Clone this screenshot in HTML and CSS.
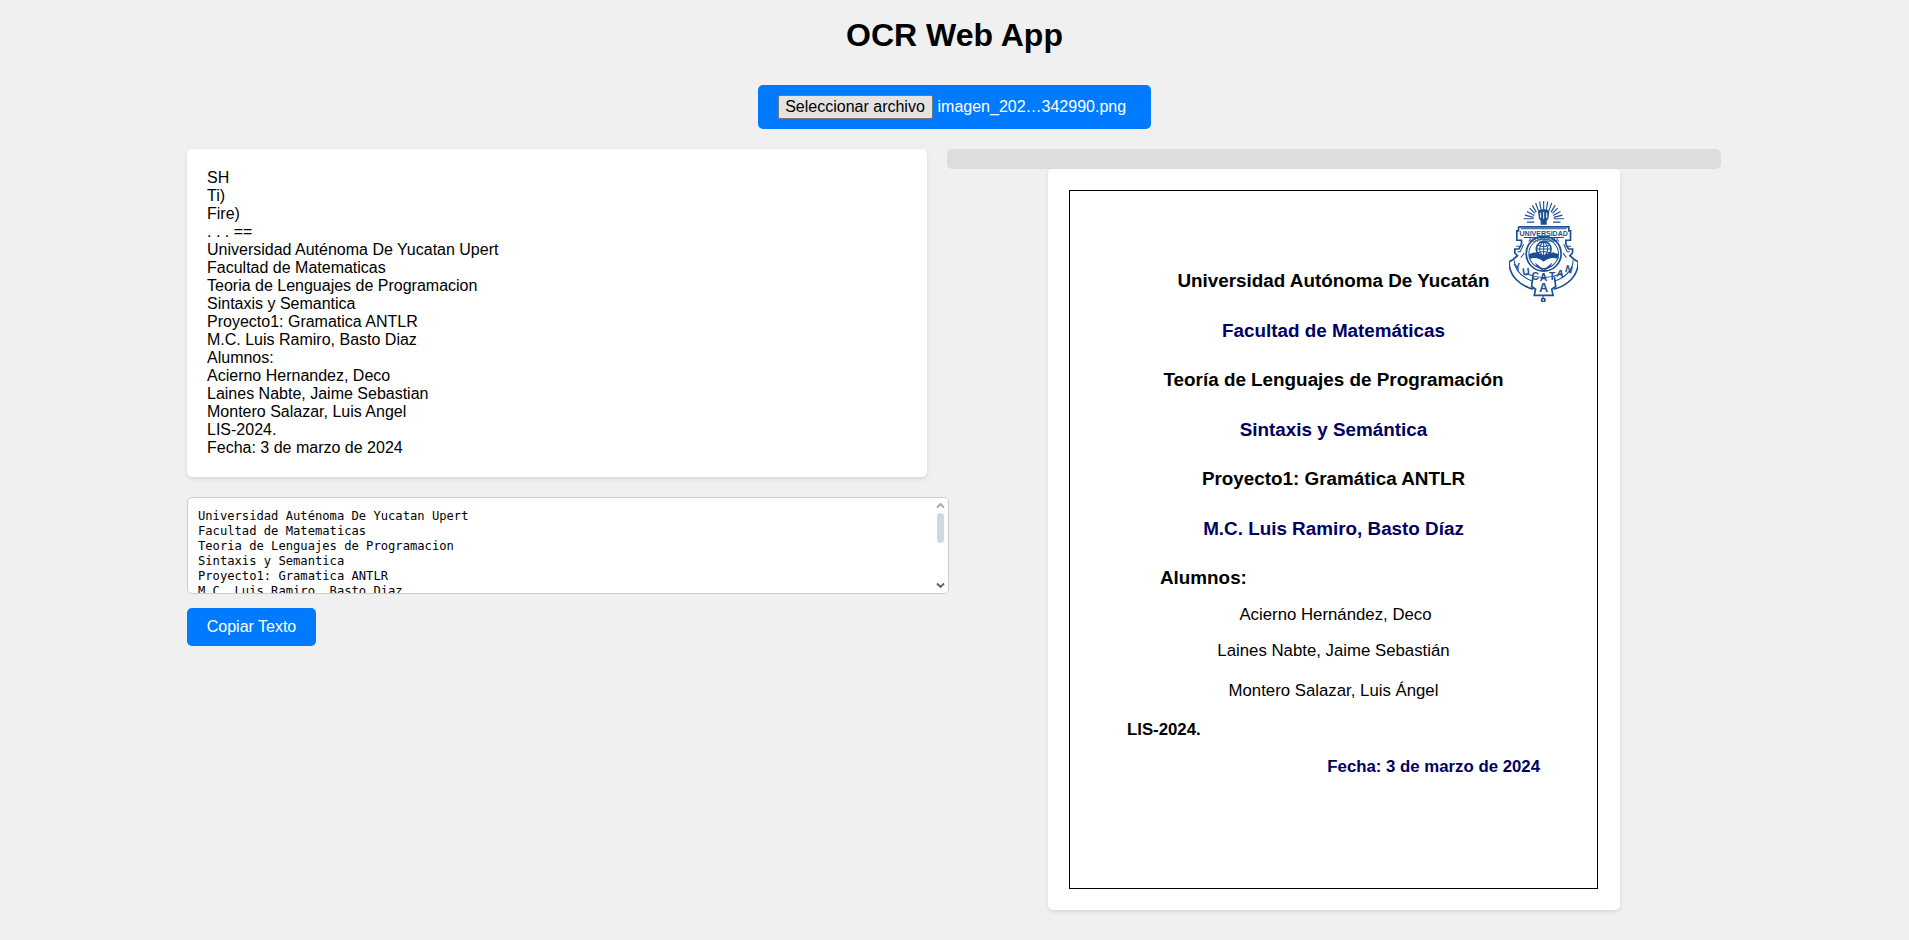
FILE: index.html
```html
<!DOCTYPE html>
<html lang="es">
<head>
<meta charset="utf-8">
<title>OCR Web App</title>
<link rel="stylesheet" href="styles.css">
</head>
<body>
<h1 class="title">OCR Web App</h1>
<div class="upload-row">
  <div class="upload"><button class="file-btn" type="button">Seleccionar archivo</button><span class="file-name">imagen_202…342990.png</span></div>
</div>
<main class="layout">
  <section class="left">
    <div class="result-card">SH
Ti)
Fire)
. . . ==
Universidad Auténoma De Yucatan Upert
Facultad de Matematicas
Teoria de Lenguajes de Programacion
Sintaxis y Semantica
Proyecto1: Gramatica ANTLR
M.C. Luis Ramiro, Basto Diaz
Alumnos:
Acierno Hernandez, Deco
Laines Nabte, Jaime Sebastian
Montero Salazar, Luis Angel
LIS-2024.
Fecha: 3 de marzo de 2024</div>
    <div class="output-wrap">
      <textarea class="output" readonly>Universidad Auténoma De Yucatan Upert
Facultad de Matematicas
Teoria de Lenguajes de Programacion
Sintaxis y Semantica
Proyecto1: Gramatica ANTLR
M.C. Luis Ramiro, Basto Diaz
Alumnos:
Acierno Hernandez, Deco
Laines Nabte, Jaime Sebastian
Montero Salazar, Luis Angel
LIS-2024.
Fecha: 3 de marzo de 2024</textarea>
      <div class="scrollbar" aria-hidden="true">
        <svg class="arrow" viewBox="0 0 9 7"><path class="arrow-up" d="M1 5.500l3.500-3.500 3.500 3.500"/></svg>
        <div class="track"><div class="thumb"></div></div>
        <svg class="arrow" viewBox="0 0 9 7"><path class="arrow-down" d="M1 1.500l3.500 3.500 3.500-3.500"/></svg>
      </div>
    </div>
    <button class="copy-btn" type="button">Copiar Texto</button>
  </section>
  <section class="right">
    <div class="bar"></div>
    <div class="image-card">
      <div class="doc">
        <svg class="logo" viewBox="27 15 205 301" aria-label="Escudo UADY">
          <g class="logo-rays">
            <path d="M130 15v26M118 17l4 24M142 17l-4 24M106 21l8 22M154 21l-8 22M96 28l12 20M164 28l-12 20M88 36l16 16M172 36l-16 16M80 46l22 12M180 46l-22 12M74 57l26 7M186 57l-26 7M70 68h30M190 68h-30M80 78h22M180 78h-22"/>
          </g>
          <path class="logo-solid" d="M113 44c5-6 28-6 34 0l-3 24-5 6v12h-18V74l-5-6z"/>
          <path class="logo-cut" d="M121 50v16M130 48v20M139 50v16"/>
          <g class="logo-lines">
            <path class="logo-heavy" d="M55 92h150v12h5v28h-14v12M55 92v12h-5v28h14v12"/>
            <path d="M62 98h136M70 124h120"/>
            <path class="logo-heavy" d="M64 144l-8 14h-12v12l8 8-14 12-11 6M196 144l8 14h12v12l-8 8 14 12 11 6"/>
            <path d="M70 144l-10 22h-8M190 144l10 22h8M72 170l-10 14M188 170l10 14M48 150h10M212 150h-10"/>
            <circle class="logo-heavy" cx="130" cy="172" r="52"/>
            <circle cx="130" cy="172" r="44"/>
            <circle class="logo-heavy" cx="130" cy="158" r="22"/>
            <path d="M108 158h44M130 136v44M112 146c12 6 24 6 36 0M112 170c12-6 24-6 36 0M130 136c-16 12-16 32 0 44M130 136c16 12 16 32 0 44"/>
            <path class="logo-heavy" d="M27 196c0 42 30 70 72 82M233 196c0 42-30 70-72 82"/>
            <path d="M42 192c2 30 22 50 56 62M218 192c-2 30-22 50-56 62"/>
            <path class="logo-heavy" d="M98 240l-4 30 12 8-4 18h56l-4-18 12-8-4-30"/>
            <path d="M76 230c34 16 74 16 108 0"/>
            <path d="M128 296v8"/>
            <circle class="logo-heavy" cx="129" cy="310" r="5"/>
          </g>
          <path class="logo-solid" d="M86 174c16-10 32-6 44 4 12-10 28-14 44-4v14c-16-6-30-4-44 8-14-12-28-14-44-8z"/>
          <path class="logo-solid" d="M104 198l26 22 26-22-6 14-20 12-20-12z"/>
          <text class="logo-t1" x="130" y="119" text-anchor="middle" textLength="144" lengthAdjust="spacingAndGlyphs">UNIVERSIDAD</text>
          <text class="logo-t2" x="130" y="138" text-anchor="middle" textLength="92" lengthAdjust="spacingAndGlyphs">AUTONOMA</text>
          <text class="logo-t3" transform="translate(44 224) rotate(-12)">Y</text>
          <text class="logo-t3" transform="translate(68 238) rotate(-8)">U</text>
          <text class="logo-t3" transform="translate(94 251)">C</text>
          <text class="logo-t3" transform="translate(118 253)">A</text>
          <text class="logo-t3" transform="translate(146 251)">T</text>
          <text class="logo-t3" transform="translate(167 240) rotate(8)">A</text>
          <text class="logo-t3" transform="translate(192 226) rotate(14)">N</text>
          <text class="logo-t4" x="130" y="287" text-anchor="middle">A</text>
        </svg>
        <div class="line big">Universidad Autónoma De Yucatán</div>
        <div class="line big navy">Facultad de Matemáticas</div>
        <div class="line big">Teoría de Lenguajes de Programación</div>
        <div class="line big navy">Sintaxis y Semántica</div>
        <div class="line big">Proyecto1: Gramática ANTLR</div>
        <div class="line big navy">M.C. Luis Ramiro, Basto Díaz</div>
        <div class="line big alumnos">Alumnos:</div>
        <div class="line name name-a">Acierno Hernández, Deco</div>
        <div class="line name name-b">Laines Nabte, Jaime Sebastián</div>
        <div class="line name name-c">Montero Salazar, Luis Ángel</div>
        <div class="line lis">LIS-2024.</div>
        <div class="line fecha">Fecha: 3 de marzo de 2024</div>
      </div>
    </div>
  </section>
</main>
</body>
</html>
```
FILE: styles.css
```css
* { box-sizing: border-box; }
html, body { margin: 0; height: 100%; overflow: hidden; }
body {
  background: #f0f0f0;
  color: #000;
  font-family: "Liberation Sans", Arial, sans-serif;
  font-size: 16px;
}
.title {
  margin: 0;
  padding-top: 17px;
  height: 85px;
  font-size: 32px;
  line-height: 37px;
  font-weight: 700;
  text-align: center;
}
.upload-row { display: flex; justify-content: center; padding-right: 1px; }
.upload {
  display: flex;
  align-items: center;
  width: 393px;
  height: 44px;
  padding: 0 20px;
  background: #007bff;
  border-radius: 5px;
}
.file-btn {
  width: 155px;
  height: 24px;
  padding: 0;
  background: #e3e3e3;
  border: 1px solid #767676;
  border-radius: 2px;
  color: #000;
  font: 16px "Liberation Sans", Arial, sans-serif;
}
.file-name { margin-left: 5px; color: #fff; white-space: nowrap; }
.layout {
  display: grid;
  grid-template-columns: 740px 774px;
  gap: 20px;
  width: 1534px;
  margin: 20px 0 0 187px;
}
.left { display: flex; flex-direction: column; align-items: flex-start; }
.result-card {
  width: 740px;
  padding: 20px;
  background: #fff;
  border-radius: 5px;
  box-shadow: 0 2px 4px rgba(0, 0, 0, .1);
  line-height: 18px;
  white-space: pre-line;
}
.output-wrap { position: relative; width: 762px; height: 97px; margin: 20px 0 14px; }
.output {
  display: block;
  width: 100%;
  height: 100%;
  padding: 11px 25px 10px 10px;
  border: 1px solid #ccc;
  border-radius: 5px;
  background: #fff;
  color: #000;
  font: 12.15px/15px "DejaVu Sans Mono", monospace;
  resize: none;
  outline: 0;
  overflow: hidden;
  white-space: pre;
}
.scrollbar {
  position: absolute;
  top: 1px;
  right: 1px;
  bottom: 1px;
  display: flex;
  flex-direction: column;
  width: 15px;
  background: #fff;
  border-radius: 0 4px 4px 0;
}
.arrow { display: block; width: 9px; height: 7px; margin: 4px 3px 4px; flex: none; }
.arrow-up, .arrow-down { fill: none; stroke-width: 1.8; }
.arrow-up { stroke: #a8a8a8; }
.arrow-down { stroke: #606060; }
.track { flex: 1; padding: 0 4px; }
.thumb { height: 30px; background: #cdd9e5; border-radius: 4px; }
.copy-btn {
  width: 129px;
  height: 38px;
  padding: 0;
  border: 0;
  border-radius: 5px;
  background: #007bff;
  color: #fff;
  font: 16px "Liberation Sans", Arial, sans-serif;
}
.right { display: flex; flex-direction: column; align-items: center; }
.bar { width: 100%; height: 20px; background: #ddd; border-radius: 5px; }
.image-card {
  width: 572px;
  height: 741px;
  padding: 21px;
  background: #fff;
  border-radius: 5px;
  box-shadow: 0 2px 4px rgba(0, 0, 0, .1);
}
.doc {
  position: relative;
  display: flex;
  flex-direction: column;
  width: 529px;
  height: 699px;
  padding-top: 65px;
  border: 1px solid #000;
}
.logo { position: absolute; left: 439px; top: 10px; width: 69px; height: 101px; }
.logo-rays { fill: none; stroke: #1b4f8f; stroke-width: 3.5; }
.logo-solid { fill: #1b4f8f; }
.logo-cut { fill: none; stroke: #fff; stroke-width: 3; }
.logo-lines { fill: none; stroke: #1b4f8f; stroke-width: 3; }
.logo-lines .logo-heavy { stroke-width: 5; }
.logo-t1, .logo-t2, .logo-t3, .logo-t4 { fill: #1b4f8f; font-family: "Liberation Sans", sans-serif; font-weight: 700; }
.logo-t1 { font-size: 22px; }
.logo-t2 { font-size: 15px; }
.logo-t3 { font-size: 31px; }
.logo-t4 { font-size: 38px; }
.line { text-align: center; white-space: nowrap; }
.big { height: 49.5px; line-height: 49.5px; font-size: 18.85px; font-weight: 700; }
.navy { color: #000060; }
.alumnos { height: 44px; line-height: 49.5px; padding-left: 90px; text-align: left; }
.name { font-size: 16.8px; }
.name-a { height: 36px; line-height: 36px; padding-left: 4px; }
.name-b { height: 39px; line-height: 36px; }
.name-c { height: 38px; line-height: 38px; }
.lis { height: 36px; line-height: 40px; padding-left: 57px; text-align: left; font-size: 16.8px; font-weight: 700; }
.fecha { line-height: 42px; padding-right: 57px; text-align: right; font-size: 16.8px; color: #000060; font-weight: 700; }
```
